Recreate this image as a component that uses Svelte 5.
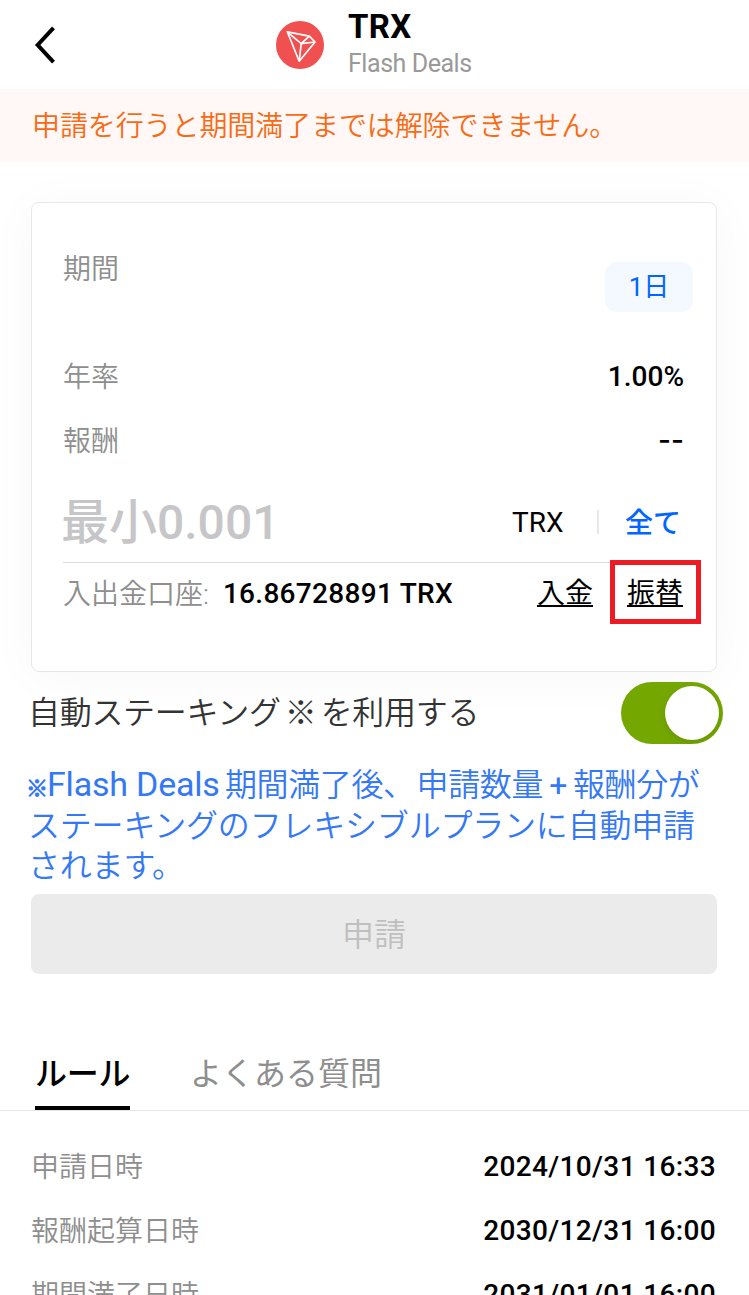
<script lang="ts">
  let autoStaking = $state(true);
  let amount = $state('');
  let activeTab = $state('rules');

  const tabs = [
    { id: 'rules', label: 'ルール' },
    { id: 'faq', label: 'よくある質問' },
  ];

  const schedule = [
    { label: '申請日時', value: '2024/10/31 16:33' },
    { label: '報酬起算日時', value: '2030/12/31 16:00' },
    { label: '期間満了日時', value: '2031/01/01 16:00' },
  ];
</script>

<div class="page">
  <header class="header">
    <button class="back" aria-label="戻る">
      <svg width="22" height="38" viewBox="0 0 22 38" fill="none" stroke="#000" stroke-width="4">
        <path d="M19.5 1.8 3.7 19l15.8 17.2" />
      </svg>
    </button>
    <svg class="coin" width="48" height="48" viewBox="0 0 48 48" fill="none">
      <circle cx="24" cy="24" r="24" fill="#f0504f" />
      <g stroke="#fff" stroke-width="1.7" stroke-linejoin="round">
        <path d="M11.3 10.8 33.3 15.2 39 21 23.2 40.2Z" />
        <path d="M11.3 10.8 25.2 22.7 23.2 40.2M25.2 22.7 33.3 15.2M25.2 22.7 39 21" />
      </g>
    </svg>
    <div class="titles">
      <h1>TRX</h1>
      <p>Flash Deals</p>
    </div>
  </header>

  <div class="notice">申請を行うと期間満了までは解除できません。</div>

  <section class="card">
    <div class="row period">
      <span class="label">期間</span>
      <button class="pill">1日</button>
    </div>
    <div class="row">
      <span class="label">年率</span>
      <span class="value">1.00%</span>
    </div>
    <div class="row">
      <span class="label">報酬</span>
      <span class="value dashes">--</span>
    </div>
    <div class="amount">
      <input type="text" placeholder="最小0.001" bind:value={amount} />
      <span class="unit">TRX</span>
      <span class="bar"></span>
      <button class="all">全て</button>
    </div>
    <div class="account">
      <span class="label">入出金口座:</span>
      <span class="value balance">16.86728891 TRX</span>
      <button class="link">入金</button>
      <button class="link transfer">振替</button>
    </div>
  </section>

  <div class="auto">
    <span class="auto-label">自動ステーキング<span class="mark">※</span>を利用する</span>
    <button
      class="toggle"
      class:on={autoStaking}
      role="switch"
      aria-checked={autoStaking}
      aria-label="自動ステーキング"
      onclick={() => (autoStaking = !autoStaking)}
    >
      <span class="knob"></span>
    </button>
  </div>

  <div class="note">
    <div class="line first">
      <span class="small-mark">※</span><span class="latin">Flash Deals</span><span>期間満了後、</span><span class="apply">申請数量</span><span class="plus">+</span><span>報酬分が</span>
    </div>
    <div class="line">ステーキングのフレキシブルプランに自動申請</div>
    <div class="line">されます。</div>
  </div>

  <button class="submit" disabled>申請</button>

  <nav class="tabs">
    {#each tabs as tab}
      <button class:active={activeTab === tab.id} onclick={() => (activeTab = tab.id)}>{tab.label}</button>
    {/each}
  </nav>

  <dl class="schedule">
    {#each schedule as item}
      <div class="item">
        <dt>{item.label}</dt>
        <dd>{item.value}</dd>
      </div>
    {/each}
  </dl>
</div>

<style>
  :global(body) {
    background: #fff;
    overflow: hidden;
  }

  .page {
    width: 749px;
    height: 1295px;
    overflow: hidden;
    background: #fff;
    color: #000;
    font-family: Roboto, 'Noto Sans CJK JP', sans-serif;
    font-size: 28px;
    font-weight: 350;
  }

  .page * {
    box-sizing: border-box;
  }

  button,
  input {
    margin: 0;
    padding: 0;
    border: none;
    background: none;
    color: inherit;
    font: inherit;
  }

  .header {
    display: flex;
    align-items: center;
    height: 89px;
    padding-left: 34px;
  }

  .back {
    display: flex;
    width: 242px;
  }

  .titles {
    margin-left: 24px;
  }

  h1 {
    margin: 0;
    font-size: 33px;
    font-weight: 700;
    line-height: 38px;
    letter-spacing: 0.3px;
  }

  .titles p {
    margin: 0;
    padding-top: 1px;
    font-size: 25px;
    font-weight: 400;
    line-height: 34px;
    letter-spacing: -0.45px;
    color: #999;
  }

  .notice {
    height: 73px;
    padding-left: 32px;
    line-height: 75px;
    letter-spacing: -0.1px;
    background: #fff8f6;
    color: #f96a14;
    white-space: nowrap;
  }

  .card {
    height: 470px;
    margin: 40px 32px 0 31px;
    padding: 34px 32px 0 31px;
    border: 1px solid #e8e8e8;
    border-radius: 8px;
    background: #fff;
    box-shadow: 0 4px 50px rgba(0, 0, 0, 0.035);
  }

  .row {
    display: flex;
    align-items: center;
    justify-content: space-between;
    height: 64px;
  }

  .row .label {
    padding-bottom: 3px;
  }

  .row.period {
    align-items: flex-start;
    height: 107px;
    padding-top: 9px;
  }

  .period .label {
    line-height: 47px;
  }

  .pill {
    width: 88px;
    height: 50px;
    margin: 16px -9px 0 0;
    padding-bottom: 5px;
    border-radius: 12px;
    background: #f4f8ff;
    color: #06f;
    font-size: 26px;
    font-weight: 400;
  }

  .label {
    color: #8e8e8e;
  }

  .value {
    font-weight: 500;
  }

  .dashes {
    font-family: Inter, sans-serif;
  }

  .amount {
    display: flex;
    align-items: center;
    height: 89px;
    margin-top: 2px;
    padding-top: 8px;
    border-bottom: 1px solid #d9d9d9;
  }

  .amount input {
    width: 451px;
    height: 70px;
    margin-left: -2px;
    outline: none;
    font-size: 48px;
    font-weight: 500;
  }

  .amount input::placeholder {
    color: #c6c6c8;
    opacity: 1;
  }

  .unit {
    width: 85px;
    font-weight: 400;
  }

  .bar {
    width: 2px;
    height: 24px;
    background: #e8e8e8;
  }

  .all {
    margin-left: 26px;
    padding-bottom: 2px;
    color: #06f;
    font-weight: 500;
  }

  .account {
    display: flex;
    align-items: center;
    height: 60px;
  }

  .account .label {
    padding-bottom: 3px;
  }

  .balance {
    flex: 1;
    margin-left: 14px;
    letter-spacing: 0.3px;
    white-space: nowrap;
  }

  .link {
    height: 42px;
    line-height: 44px;
    font-weight: 400;
    text-decoration: underline;
    text-decoration-thickness: 2px;
    text-underline-offset: 2px;
  }

  .transfer {
    position: relative;
    margin: 0 1px 0 34px;
  }

  .transfer::after {
    content: '';
    position: absolute;
    inset: -12px -18px -10px -17px;
    border: 5px solid #ed1c24;
  }

  .auto {
    display: flex;
    align-items: center;
    justify-content: space-between;
    height: 62px;
    margin-top: 10px;
    padding: 0 26px 0 28px;
    color: #333;
    font-size: 32px;
  }

  .auto-label {
    padding-bottom: 6px;
    letter-spacing: -0.3px;
  }

  .mark {
    display: inline-block;
    width: 40px;
    text-align: center;
  }

  .toggle {
    display: flex;
    align-items: center;
    width: 102px;
    height: 62px;
    padding: 0 4px;
    border-radius: 31px;
    background: #ccc;
    overflow: hidden;
  }

  .toggle.on {
    justify-content: flex-end;
    background: #74a800;
  }

  .knob {
    width: 54px;
    height: 54px;
    border-radius: 50%;
    background: #fff;
    box-shadow: 0 3px 10px rgba(0, 0, 0, 0.12);
  }

  .note {
    height: 122px;
    margin: 21px 0 0 28px;
    color: #3478f6;
    font-size: 32px;
    letter-spacing: -0.2px;
    white-space: nowrap;
  }

  .line {
    height: 40.5px;
    line-height: 40.5px;
  }

  .first {
    display: flex;
    align-items: baseline;
    margin-left: -2px;
    line-height: 38.5px;
    letter-spacing: -0.4px;
  }

  .small-mark {
    width: 21px;
    font-size: 22px;
    -webkit-text-stroke: 1px #3478f6;
  }

  .latin {
    width: 178px;
    font-size: 34px;
    font-weight: 400;
    letter-spacing: -0.2px;
  }

  .apply {
    margin-left: 2px;
  }

  .plus {
    width: 30px;
    text-align: center;
    font-weight: 400;
  }

  .submit {
    display: block;
    width: 686px;
    height: 80px;
    margin: 7px 0 0 31px;
    padding-bottom: 4px;
    border-radius: 8px;
    background: #ebebeb;
    color: #bfbfbf;
    font-size: 32px;
  }

  .tabs {
    display: flex;
    gap: 60px;
    height: 137px;
    padding: 62px 0 0 35px;
    border-bottom: 1px solid #e6e6e6;
  }

  .tabs button {
    height: 74px;
    border-bottom: 4px solid transparent;
    color: #8e8e8e;
    font-size: 32px;
    font-weight: 400;
  }

  .tabs button.active {
    border-color: #000;
    color: #000;
    font-weight: 500;
    letter-spacing: -0.3px;
  }

  .schedule {
    margin: 23px 33px 0 31px;
  }

  .item {
    display: flex;
    align-items: center;
    justify-content: space-between;
    height: 64px;
  }

  dt {
    padding-bottom: 2px;
    color: #8e8e8e;
  }

  dd {
    margin: 0;
    font-weight: 500;
    letter-spacing: 0.35px;
  }
</style>
